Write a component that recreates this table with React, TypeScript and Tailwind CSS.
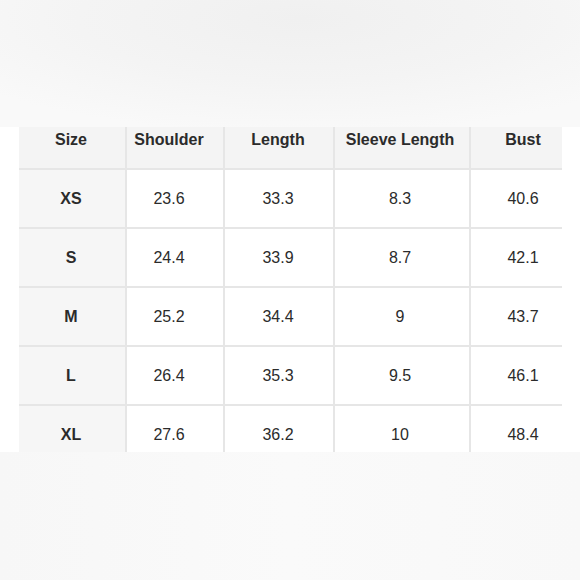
const headers = ["Size", "Shoulder", "Length", "Sleeve Length", "Bust"];

const rows = [
  ["XS", "23.6", "33.3", "8.3", "40.6"],
  ["S", "24.4", "33.9", "8.7", "42.1"],
  ["M", "25.2", "34.4", "9", "43.7"],
  ["L", "26.4", "35.3", "9.5", "46.1"],
  ["XL", "27.6", "36.2", "10", "48.4"],
];

// column widths include the 2px right border
const cols = "grid grid-cols-[108px_98px_110px_136px_106px]";

// nudges so each label sits where the screenshot has it
const pads = ["pr-[2px]", "pr-[12px]", "pr-[2px]", "pr-[4px]", "pr-[2px]"];

export default function App() {
  return (
    <main
      className="flex h-[580px] w-[580px] flex-col overflow-hidden bg-white text-[#2b2b2b]"
      style={{ fontFamily: '"Liberation Sans", Arial, sans-serif' }}
    >
      <div className="h-[127px] shrink-0 bg-[radial-gradient(ellipse_70%_90%_at_52%_15%,#f0f0f0_0%,#f4f4f4_55%,#f9f9f9_100%)]" />

      <div className="h-[325px] shrink-0 overflow-hidden pl-[19px]">
        <div className="w-[543px] overflow-hidden">
          <div className={`${cols} h-[43px] border-b-2 border-[#e6e6e6] bg-[#f4f4f4]`}>
            {headers.map((h, i) => (
              <div
                key={h}
                className={`pt-[1px] text-center text-base font-bold leading-6 ${pads[i]} ${
                  i < 4 ? "border-r-2 border-[#e6e6e6]" : ""
                }`}
              >
                {h}
              </div>
            ))}
          </div>

          {rows.map((row) => (
            <div key={row[0]} className={`${cols} h-[59px] border-b-2 border-[#e6e6e6]`}>
              {row.map((cell, i) => (
                <div
                  key={i}
                  className={`flex items-center justify-center text-base ${pads[i]} ${
                    i === 0 ? "bg-[#f6f6f6] font-bold" : "bg-white"
                  } ${i < 4 ? "border-r-2 border-[#e6e6e6]" : ""}`}
                >
                  {cell}
                </div>
              ))}
            </div>
          ))}
        </div>
      </div>

      <div className="flex-1 bg-[linear-gradient(90deg,#f7f7f7,#fafafa_50%,#f8f8f8)]" />
    </main>
  );
}
